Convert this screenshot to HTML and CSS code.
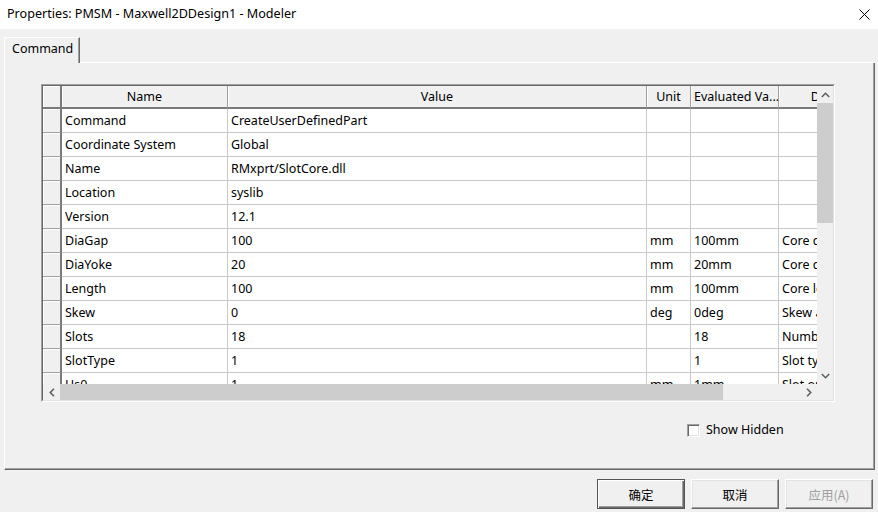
FILE: index.html
```html
<!DOCTYPE html>
<html>
<head>
<meta charset="utf-8">
<title>Properties</title>
<link rel="stylesheet" href="styles.css">
</head>
<body>
<div class="titlebar">
  <span class="title">Properties: PMSM - Maxwell2DDesign1 - Modeler</span>
  <svg class="close" width="11" height="11" viewBox="0 0 11 11"><path d="M0.5 0.5L10.5 10.5M10.5 0.5L0.5 10.5" stroke="#000" stroke-width="1" fill="none"/></svg>
</div>
<div class="tabs">
  <div class="tab">Command</div>
  <div class="tab-fill"></div>
</div>
<div class="panel">
  <div class="grid">
    <div class="grid-inner">
      <div class="viewport">
        <table class="props">
          <colgroup>
            <col class="c-rh"><col class="c-name"><col class="c-value"><col class="c-unit"><col class="c-eval"><col class="c-desc">
          </colgroup>
          <thead>
            <tr><th class="rh"></th><th>Name</th><th>Value</th><th>Unit</th><th class="left">Evaluated Va...</th><th>Description</th></tr>
          </thead>
          <tbody>
            <tr><td class="rh"></td><td>Command</td><td>CreateUserDefinedPart</td><td></td><td></td><td></td></tr>
            <tr><td class="rh"></td><td>Coordinate System</td><td>Global</td><td></td><td></td><td></td></tr>
            <tr><td class="rh"></td><td>Name</td><td>RMxprt/SlotCore.dll</td><td></td><td></td><td></td></tr>
            <tr><td class="rh"></td><td>Location</td><td>syslib</td><td></td><td></td><td></td></tr>
            <tr><td class="rh"></td><td>Version</td><td>12.1</td><td></td><td></td><td></td></tr>
            <tr><td class="rh"></td><td>DiaGap</td><td>100</td><td>mm</td><td>100mm</td><td>Core diameter on gap side</td></tr>
            <tr><td class="rh"></td><td>DiaYoke</td><td>20</td><td>mm</td><td>20mm</td><td>Core diameter on yoke side</td></tr>
            <tr><td class="rh"></td><td>Length</td><td>100</td><td>mm</td><td>100mm</td><td>Core length</td></tr>
            <tr><td class="rh"></td><td>Skew</td><td>0</td><td>deg</td><td>0deg</td><td>Skew angle in core length range</td></tr>
            <tr><td class="rh"></td><td>Slots</td><td>18</td><td></td><td>18</td><td>Number of slots</td></tr>
            <tr><td class="rh"></td><td>SlotType</td><td>1</td><td></td><td>1</td><td>Slot type: 1 to 6</td></tr>
            <tr><td class="rh"></td><td>Hs0</td><td>1</td><td>mm</td><td>1mm</td><td>Slot opening height</td></tr>
          </tbody>
        </table>
      </div>
      <div class="vscroll">
        <div class="sbtn"><svg width="9" height="6" viewBox="0 0 9 6"><polyline points="0.8,5 4.5,1.3 8.2,5" fill="none" stroke="#606060" stroke-width="1.6"/></svg></div>
        <div class="vthumb"></div>
        <div class="track"></div>
        <div class="sbtn"><svg width="9" height="6" viewBox="0 0 9 6"><polyline points="0.8,1 4.5,4.7 8.2,1" fill="none" stroke="#606060" stroke-width="1.6"/></svg></div>
      </div>
      <div class="hscroll">
        <div class="sbtn"><svg width="6" height="9" viewBox="0 0 6 9"><polyline points="5,0.8 1.3,4.5 5,8.2" fill="none" stroke="#606060" stroke-width="1.6"/></svg></div>
        <div class="hthumb"></div>
        <div class="track"></div>
        <div class="sbtn"><svg width="6" height="9" viewBox="0 0 6 9"><polyline points="1,0.8 4.7,4.5 1,8.2" fill="none" stroke="#606060" stroke-width="1.6"/></svg></div>
      </div>
      <div class="corner"></div>
    </div>
  </div>
  <div class="options">
    <label class="check"><span class="box"></span>Show Hidden</label>
  </div>
</div>
<div class="buttons">
  <button class="btn default">确定</button>
  <button class="btn">取消</button>
  <button class="btn disabled">应用(A)</button>
</div>
</body>
</html>
```
FILE: styles.css
```css
* { box-sizing: border-box; }
html, body { margin: 0; padding: 0; }
body {
  width: 878px;
  height: 512px;
  overflow: hidden;
  background: #f0f0f0;
  font-family: "Noto Sans", "Noto Sans CJK SC", sans-serif;
  font-size: 12.5px;
  color: #000;
}
.titlebar {
  height: 29px;
  background: #fff;
  display: flex;
  align-items: center;
  justify-content: space-between;
  padding: 0 8px 3px 7px;
}
.title { font-size: 12.6px; }
.close { display: block; margin-top: 2px; }

.tabs {
  display: flex;
  margin: 8px 3px 0 4px;
  height: 26px;
}
.tab {
  width: 76px;
  height: 26px;
  border-top: 1px solid #fff;
  border-left: 1px solid #fff;
  border-right: 1px solid #696969;
  box-shadow: inset -1px 0 #a0a0a0;
  padding: 1px 0 0 7px;
  line-height: 20px;
}
.tab-fill {
  flex: 1;
  border-bottom: 1px solid #fff;
}

.panel {
  margin: 0 3px 0 4px;
  height: 407px;
  border-left: 1px solid #fff;
  border-right: 1px solid #696969;
  border-bottom: 1px solid #696969;
  box-shadow: inset -1px -1px #a0a0a0;
  padding: 21px 0 0 36px;
}

.grid {
  width: 794px;
  height: 318px;
  border: 1px solid;
  border-color: #a0a0a0 #fff #fff #a0a0a0;
}
.grid-inner {
  width: 100%;
  height: 100%;
  border: 1px solid;
  border-color: #696969 #e3e3e3 #e3e3e3 #696969;
  display: grid;
  grid-template-columns: 1fr 16px;
  grid-template-rows: 1fr 16px;
  background: #fff;
}
.viewport {
  overflow: hidden;
  background: #fff;
}
.props {
  border-collapse: separate;
  border-spacing: 0;
  table-layout: fixed;
  width: 868px;
}
.c-rh { width: 19px; }
.c-name { width: 166px; }
.c-value { width: 419px; }
.c-unit { width: 44px; }
.c-eval { width: 88px; }
.c-desc { width: 132px; }

.props th {
  height: 23px;
  padding: 0 3px;
  font-weight: normal;
  text-align: center;
  background: #f0f0f0;
  border-right: 1px solid #a0a0a0;
  border-bottom: 2px solid #7a7a7a;
  box-shadow: inset 1px 0 #fff;
  white-space: nowrap;
  overflow: hidden;
  line-height: 18px;
}
.props th.left { text-align: left; }
.props td {
  height: 24px;
  padding: 0 3px;
  border-right: 1px solid #cacaca;
  border-bottom: 1px solid #cacaca;
  white-space: nowrap;
  overflow: hidden;
  line-height: 20px;
}
.props .rh {
  background: #f0f0f0;
  border-right: 2px solid #7a7a7a;
  border-bottom: 1px solid #a0a0a0;
  box-shadow: inset 1px 1px #fff;
  padding: 0;
}
.props th.rh { border-bottom: 2px solid #7a7a7a; }

.vscroll {
  background: #f0f0f0;
  display: flex;
  flex-direction: column;
}
.vscroll .sbtn {
  height: 17px;
  display: flex;
  align-items: center;
  justify-content: center;
}
.vthumb {
  height: 120px;
  background: #cdcdcd;
}
.track { flex: 1; }
.hscroll {
  background: #f0f0f0;
  display: flex;
}
.hscroll .sbtn {
  width: 17px;
  display: flex;
  align-items: center;
  justify-content: center;
}
.hthumb {
  width: 663px;
  background: #cdcdcd;
}
.sbtn svg { display: block; }
.corner { background: #f0f0f0; }

.options {
  margin: 21px 0 0 646px;
  height: 14px;
}
.check {
  display: flex;
  align-items: center;
  gap: 6px;
  line-height: 14px;
}
.box {
  width: 13px;
  height: 13px;
  background: #fff;
  border: 1px solid;
  border-color: #a0a0a0 #fff #fff #a0a0a0;
  box-shadow: inset 1px 1px #696969, inset -1px -1px #e3e3e3;
}

.buttons {
  display: flex;
  justify-content: flex-end;
  gap: 6px;
  padding: 9px 5px 0 0;
}
.btn {
  width: 88px;
  height: 30px;
  margin: 0;
  padding: 0;
  font-family: "Noto Sans CJK SC", sans-serif;
  font-size: 12.5px;
  color: #000;
  background: #f0f0f0;
  border: 1px solid;
  border-color: #fff #696969 #696969 #fff;
  box-shadow: inset -1px -1px #a0a0a0, inset 1px 1px #e3e3e3;
}
.btn.default {
  border: 1px solid #555;
  box-shadow: inset 1px 1px #fff, inset -1px -1px #696969, inset -2px -2px #a0a0a0;
}
.btn.disabled { color: #a0a0a0; }
```
